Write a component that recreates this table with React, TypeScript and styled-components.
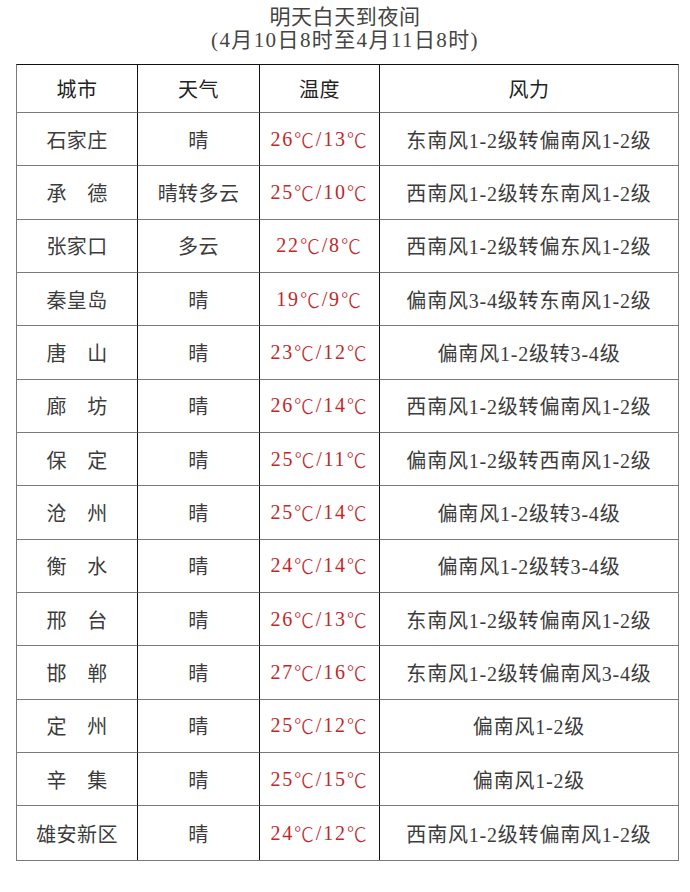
import React from "react";
import styled, { createGlobalStyle } from "styled-components";

type Row = {
  city: string;
  weather: string;
  temp: string;
  wind: string;
};

const rows: Row[] = [
  { city: "石家庄", weather: "晴", temp: "26℃/13℃", wind: "东南风1-2级转偏南风1-2级" },
  { city: "承　德", weather: "晴转多云", temp: "25℃/10℃", wind: "西南风1-2级转东南风1-2级" },
  { city: "张家口", weather: "多云", temp: "22℃/8℃", wind: "西南风1-2级转偏东风1-2级" },
  { city: "秦皇岛", weather: "晴", temp: "19℃/9℃", wind: "偏南风3-4级转东南风1-2级" },
  { city: "唐　山", weather: "晴", temp: "23℃/12℃", wind: "偏南风1-2级转3-4级" },
  { city: "廊　坊", weather: "晴", temp: "26℃/14℃", wind: "西南风1-2级转偏南风1-2级" },
  { city: "保　定", weather: "晴", temp: "25℃/11℃", wind: "偏南风1-2级转西南风1-2级" },
  { city: "沧　州", weather: "晴", temp: "25℃/14℃", wind: "偏南风1-2级转3-4级" },
  { city: "衡　水", weather: "晴", temp: "24℃/14℃", wind: "偏南风1-2级转3-4级" },
  { city: "邢　台", weather: "晴", temp: "26℃/13℃", wind: "东南风1-2级转偏南风1-2级" },
  { city: "邯　郸", weather: "晴", temp: "27℃/16℃", wind: "东南风1-2级转偏南风3-4级" },
  { city: "定　州", weather: "晴", temp: "25℃/12℃", wind: "偏南风1-2级" },
  { city: "辛　集", weather: "晴", temp: "25℃/15℃", wind: "偏南风1-2级" },
  { city: "雄安新区", weather: "晴", temp: "24℃/12℃", wind: "西南风1-2级转偏南风1-2级" },
];

const GlobalStyle = createGlobalStyle`
  html, body {
    margin: 0;
    padding: 0;
    background: #ffffff;
  }
  body {
    font-family: "Liberation Serif", "Noto Sans CJK SC", serif;
    color: #3c3c3c;
  }
`;

const Page = styled.div`
  width: 690px;
  height: 892px;
  padding-top: 6px;
  box-sizing: border-box;
`;

const Title = styled.div`
  text-align: center;
  margin-bottom: 12px;
  color: #444444;
`;

const TitleLine = styled.div<{ $spacing: number }>`
  font-size: 21px;
  line-height: 23px;
  letter-spacing: ${(p) => p.$spacing}px;
`;

const Table = styled.div`
  margin-left: 16px;
  width: 661px;
  display: grid;
  grid-template-columns: 121px 122px 120px 298px;
  grid-template-rows: 48px repeat(14, 53.35px);
  border-top: 1.5px solid #111111;
  border-right: 1.5px solid #7a7a7a;
  border-bottom: 1.5px solid #7a7a7a;
  border-left: 1.5px solid #7a7a7a;
`;

const Cell = styled.div<{ $last?: boolean; $head?: boolean; $red?: boolean; $spacing?: number }>`
  display: flex;
  align-items: center;
  justify-content: center;
  white-space: nowrap;
  font-size: 20px;
  color: ${(p) => (p.$red ? "#c0282b" : p.$head ? "#222222" : "#3c3c3c")};
  letter-spacing: ${(p) => p.$spacing ?? 0.4}px;
  border-right: ${(p) => (p.$last ? "none" : "1.5px solid #111111")};
  border-bottom: 1.5px solid #7a7a7a;
  box-sizing: border-box;

  &:nth-last-child(-n + 4) {
    border-bottom: none;
  }
`;

const Degree = styled.span`
  font-family: "Noto Sans CJK SC", sans-serif;
  font-weight: 300;
  font-size: 20px;
`;

function Temp({ value }: { value: string }) {
  const parts = value.split("℃");
  return (
    <>
      {parts.map((p, i) => (
        <React.Fragment key={i}>
          {p}
          {i < parts.length - 1 && <Degree>℃</Degree>}
        </React.Fragment>
      ))}
    </>
  );
}

export default function App() {
  return (
    <Page>
      <GlobalStyle />
      <Title>
        <TitleLine $spacing={0.6}>明天白天到夜间</TitleLine>
        <TitleLine $spacing={1.4}>(4月10日8时至4月11日8时)</TitleLine>
      </Title>
      <Table>
        <Cell $head>城市</Cell>
        <Cell $head>天气</Cell>
        <Cell $head>温度</Cell>
        <Cell $head $last>
          风力
        </Cell>
        {rows.map((r) => (
          <React.Fragment key={r.city}>
            <Cell>{r.city}</Cell>
            <Cell>{r.weather}</Cell>
            <Cell $red $spacing={1.8}>
              <Temp value={r.temp} />
            </Cell>
            <Cell $last $spacing={0.8}>
              {r.wind}
            </Cell>
          </React.Fragment>
        ))}
      </Table>
    </Page>
  );
}
